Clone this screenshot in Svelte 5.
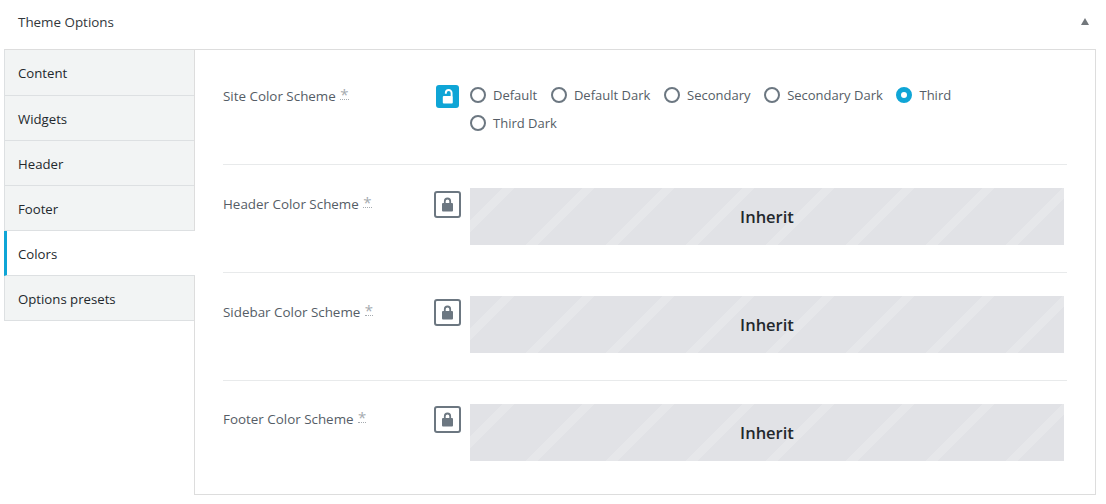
<script lang="ts">
	const tabs = ['Content', 'Widgets', 'Header', 'Footer', 'Colors', 'Options presets'];
	const active = 'Colors';
	const schemes = ['Default', 'Default Dark', 'Secondary', 'Secondary Dark', 'Third', 'Third Dark'];
	const selected = 'Third';
	const inherited = ['Header Color Scheme', 'Sidebar Color Scheme', 'Footer Color Scheme'];
</script>

<div class="box">
	<header class="head">
		<h2>Theme Options</h2>
		<span class="toggle" aria-hidden="true"></span>
	</header>
	<div class="panel">
		<nav class="tabs">
			{#each tabs as tab}
				<div class="tab" class:active={tab === active}>{tab}</div>
			{/each}
		</nav>
		<div class="content">
			<div class="row first">
				<div class="label">Site Color Scheme <span class="star">*</span></div>
				<button class="lock open" aria-label="Unlocked">
					<svg width="13" height="15" viewBox="0 0 13 15">
						<path d="M10.6 7.5V3.9a2.9 2.9 0 0 0-5.8 0v.9" fill="none" stroke="#fff" stroke-width="1.9" />
						<rect x="1.8" y="7" width="10" height="7.4" rx="1" fill="#fff" />
					</svg>
				</button>
				<div class="radios">
					{#each schemes as scheme}
						<label class="radio">
							<span class="dot" class:on={scheme === selected}></span>
							{scheme}
						</label>
					{/each}
				</div>
			</div>
			{#each inherited as name}
				<div class="row">
					<div class="label">{name} <span class="star">*</span></div>
					<button class="lock" aria-label="Locked">
						<svg width="13" height="15" viewBox="0 0 13 15">
							<path d="M3.8 7V4.2a2.7 2.7 0 0 1 5.4 0V7" fill="none" stroke="#6c7781" stroke-width="1.8" />
							<rect x="1" y="6" width="11" height="8.6" rx="1" fill="#6c7781" />
						</svg>
					</button>
					<div class="inherit">Inherit</div>
				</div>
			{/each}
		</div>
	</div>
</div>

<style>
	:global(body) {
		background: #fff;
	}
	.box {
		width: 1106px;
		height: 504px;
		box-sizing: border-box;
		padding: 0 10px 0 4px;
		font-family: 'Open Sans', 'Noto Sans', sans-serif;
		font-size: 13px;
		color: #23282d;
	}
	.head {
		display: flex;
		justify-content: space-between;
		align-items: center;
		height: 49px;
		padding: 0 7px 5px 14px;
		box-sizing: border-box;
	}
	h2 {
		margin: 0;
		font-size: 13.4px;
		font-weight: 400;
		color: #32373c;
	}
	.toggle {
		width: 0;
		height: 0;
		border-left: 4.5px solid transparent;
		border-right: 4.5px solid transparent;
		border-bottom: 7px solid #72777c;
		margin-bottom: 2px;
	}
	.panel {
		display: flex;
		height: 446px;
		box-sizing: border-box;
	}
	.tabs {
		width: 190px;
		flex: none;
		align-self: flex-start;
		border-top: 1px solid #ddd;
		border-left: 1px solid #dde0e2;
		box-sizing: border-box;
	}
	.tab {
		height: 45px;
		box-sizing: border-box;
		padding: 1px 13px 0;
		display: flex;
		align-items: center;
		font-size: 13.2px;
		background: #f2f4f4;
		border-bottom: 1px solid #dde0e2;
	}
	.tab:first-child {
		height: 46px;
	}
	.tab.active {
		background: #fff;
		margin-left: -1px;
		border-left: 3px solid #0fa5d6;
		padding-left: 11px;
		margin-right: -1px;
		position: relative;
		z-index: 1;
	}
	.content {
		flex: 1;
		border: 1px solid #ddd;
		padding: 0 28px;
		min-width: 0;
	}
	.row {
		display: flex;
		align-items: flex-start;
		height: 108px;
		box-sizing: border-box;
		padding-top: 23px;
		border-bottom: 1px solid #e8eaeb;
	}
	.row.first {
		height: 115px;
		padding-top: 34px;
	}
	.row:last-child {
		border-bottom: none;
	}
	.label {
		width: 211px;
		flex: none;
		color: #555d66;
		font-size: 13.4px;
		line-height: 20px;
		margin-top: 6px;
	}
	.first .label {
		margin-top: 2px;
	}
	.row:last-child .label {
		margin-top: 5px;
	}
	.star {
		color: #a5abb0;
		border-bottom: 1px dotted #a5abb0;
		font-size: 15px;
		line-height: 13px;
		height: 11px;
		display: inline-block;
		margin-left: 1px;
		vertical-align: 1px;
	}
	.lock {
		width: 27px;
		height: 27px;
		flex: none;
		padding: 0;
		margin: 3px 9px 0 0;
		border: 2px solid #6c7781;
		border-radius: 3px;
		background: #fff;
		display: flex;
		align-items: center;
		justify-content: center;
	}
	.row:last-child .lock {
		margin-top: 2px;
		margin-bottom: 1px;
	}
	.lock.open {
		width: 23px;
		height: 23px;
		margin: 1px 11px 0 2px;
		border: none;
		background: #0fa5d6;
	}
	.radios {
		display: flex;
		flex-wrap: wrap;
		gap: 0 13.7px;
		flex: 1;
		max-width: 560px;
		margin-top: -3px;
	}
	.radio {
		display: flex;
		align-items: center;
		gap: 7px;
		height: 28px;
		color: #555d66;
	}
	.dot {
		width: 16px;
		height: 16px;
		box-sizing: border-box;
		border: 2px solid #6c7781;
		border-radius: 50%;
		background: #fff;
	}
	.dot.on {
		border: 5px solid #0fa5d6;
	}
	.inherit {
		width: 594px;
		height: 57px;
		display: flex;
		align-items: center;
		justify-content: center;
		font-size: 16.5px;
		font-weight: 600;
		color: #23282d;
		background-color: #e1e2e6;
		background-image: repeating-linear-gradient(
			135deg,
			#e1e2e6 0 23.3px,
			#e6e7ea 23.3px 31.8px,
			#e1e2e6 31.8px 56.57px
		);
	}
</style>
